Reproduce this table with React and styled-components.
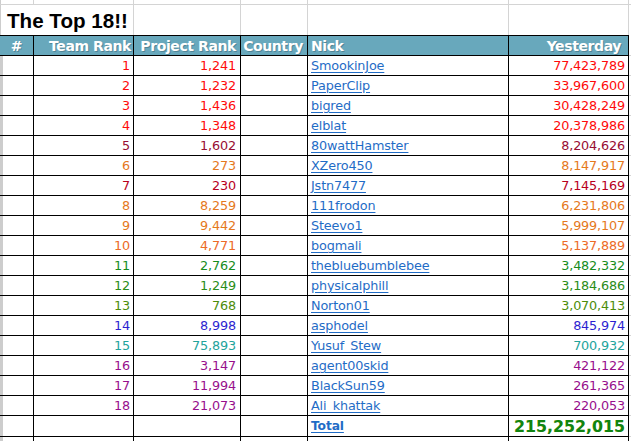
import React from 'react';
import styled, { createGlobalStyle } from 'styled-components';

const GlobalStyle = createGlobalStyle`
  html, body { margin: 0; padding: 0; background: #ffffff; }
  body { width: 631px; height: 441px; overflow: hidden; font-family: "DejaVu Sans", Verdana, sans-serif; }
`;

const COLS = '34px 100px 107px 67px 201px 120px 1fr';
const GRID = '#d4d4d4';
const LINE = '#000000';

const Sheet = styled.div`
  display: flex;
  flex-direction: column;
  width: 631px;
`;

const Row = styled.div`
  display: grid;
  grid-template-columns: ${COLS};
  height: ${(p) => p.$h}px;
`;

const Cell = styled.div`
  box-sizing: border-box;
  display: flex;
  align-items: center;
  justify-content: ${(p) => (p.$align === 'right' ? 'flex-end' : p.$align === 'center' ? 'center' : 'flex-start')};
  padding: 0 ${(p) => (p.$pr != null ? p.$pr : 3)}px 0 ${(p) => (p.$pl != null ? p.$pl : 3)}px;
  border-right: 1px solid ${(p) => (p.$grid ? GRID : LINE)};
  border-bottom: ${(p) => (p.$noBottom ? 'none' : `1px solid ${p.$grid ? GRID : LINE}`)};
  box-shadow: ${(p) => (p.$edge ? `inset ${p.$edge}px 0 0 #cdcdcd` : 'none')};
  white-space: nowrap;
  overflow: visible;
  font-size: 12.8px;
  letter-spacing: -0.15px;
  color: ${(p) => p.$color || '#000'};
`;

const HeadCell = styled(Cell)`
  border-top: 1px solid ${LINE};
  background: ${(p) => (p.$blank ? '#ffffff' : '#68a8bc')};
  border-right-color: ${(p) => (p.$blank ? GRID : LINE)};
  border-bottom-color: ${(p) => (p.$blank ? GRID : LINE)};
  border-top-color: ${(p) => (p.$blank ? 'transparent' : LINE)};
  color: #ffffff;
  font-weight: bold;
  font-size: 14px;
  letter-spacing: -0.4px;
  text-shadow: 1px 1px 0 rgba(40, 70, 80, 0.35);
`;

const TitleCell = styled.div`
  grid-column: 1 / span 2;
  box-sizing: border-box;
  display: flex;
  align-items: flex-end;
  padding: 0 0 2px 7px;
  border-right: 1px solid ${GRID};
  box-shadow: inset 1px 0 0 #cdcdcd;
  font-family: "Liberation Sans", Arial, sans-serif;
  font-weight: bold;
  font-size: 20.6px;
  line-height: 24px;
  color: #000;
`;

const NickLink = styled.a`
  color: #1f6cc6;
  text-decoration: underline;
  text-underline-offset: 2px;
  font-weight: ${(p) => (p.$bold ? 'bold' : 'normal')};
  font-size: ${(p) => (p.$bold ? '12.3px' : '12.8px')};
`;

const TotalValue = styled.span`
  font-weight: bold;
  font-size: 15.8px;
  letter-spacing: 0;
  color: #118411;
  text-shadow: 0 0 0.6px rgba(200, 180, 0, 0.5);
`;

const C = {
  red: '#ff0a0a',
  maroon: '#980d32',
  darkred: '#b8001c',
  orange: '#e5781c',
  orangeRed: '#ec6a26',
  green: '#168c1c',
  green2: '#2a8c18',
  olive: '#4c8c0a',
  blue: '#2c1fd0',
  teal: '#22a39b',
  purple: '#970f8c',
};

const rows = [
  [1, '1,241', 'SmookinJoe', '77,423,789', C.red],
  [2, '1,232', 'PaperClip', '33,967,600', C.red],
  [3, '1,436', 'bigred', '30,428,249', C.red],
  [4, '1,348', 'elblat', '20,378,986', C.red],
  [5, '1,602', '80wattHamster', '8,204,626', C.maroon],
  [6, '273', 'XZero450', '8,147,917', C.orange],
  [7, '230', 'Jstn7477', '7,145,169', C.darkred],
  [8, '8,259', '111frodon', '6,231,806', C.orange],
  [9, '9,442', 'Steevo1', '5,999,107', C.orange],
  [10, '4,771', 'bogmali', '5,137,889', C.orangeRed],
  [11, '2,762', 'thebluebumblebee', '3,482,332', C.green],
  [12, '1,249', 'physicalphill', '3,184,686', C.green2],
  [13, '768', 'Norton01', '3,070,413', C.olive],
  [14, '8,998', 'asphodel', '845,974', C.blue],
  [15, '75,893', 'Yusuf_Stew', '700,932', C.teal],
  [16, '3,147', 'agent00skid', '421,122', C.purple],
  [17, '11,994', 'BlackSun59', '261,365', C.purple],
  [18, '21,073', 'Ali_khattak', '220,053', C.purple],
];

export default function App() {
  return (
    <>
      <GlobalStyle />
      <Sheet>
        <Row $h={5}>
          <Cell $grid $edge={1} />
          <Cell $grid />
          <Cell $grid />
          <Cell $grid />
          <Cell $grid />
          <Cell $grid />
          <Cell $grid />
        </Row>
        <Row $h={30}>
          <TitleCell>The Top 18!!</TitleCell>
          <Cell $grid $noBottom />
          <Cell $grid $noBottom />
          <Cell $grid $noBottom />
          <Cell $grid $noBottom />
          <Cell $grid $noBottom />
        </Row>
        <Row $h={21}>
          <HeadCell $align="center" $pl={0} $pr={0}>#</HeadCell>
          <HeadCell $align="right" $pr={2}>Team Rank</HeadCell>
          <HeadCell $align="right" $pr={4}>Project Rank</HeadCell>
          <HeadCell $align="center" $pl={0} $pr={2}>Country</HeadCell>
          <HeadCell $align="left" $pl={3}>Nick</HeadCell>
          <HeadCell $align="right" $pr={7}>Yesterday</HeadCell>
          <HeadCell $blank />
        </Row>
        {rows.map(([rank, proj, nick, yest, color]) => (
          <Row $h={20} key={rank}>
            <Cell $edge={3} />
            <Cell $align="right" $color={color}>{rank}</Cell>
            <Cell $align="right" $pr={4} $color={color}>{proj}</Cell>
            <Cell />
            <Cell $align="left">
              <NickLink href="#">{nick}</NickLink>
            </Cell>
            <Cell $align="right" $color={color}>{yest}</Cell>
            <Cell $grid />
          </Row>
        ))}
        <Row $h={21}>
          <Cell $edge={3} />
          <Cell />
          <Cell />
          <Cell />
          <Cell $align="left">
            <NickLink href="#" $bold>Total</NickLink>
          </Cell>
          <Cell $align="right">
            <TotalValue>215,252,015</TotalValue>
          </Cell>
          <Cell $grid />
        </Row>
        <Row $h={10}>
          <Cell $edge={3} $noBottom />
          <Cell $noBottom />
          <Cell $noBottom />
          <Cell $noBottom />
          <Cell $noBottom />
          <Cell $noBottom />
          <Cell $grid $noBottom />
        </Row>
      </Sheet>
    </>
  );
}
